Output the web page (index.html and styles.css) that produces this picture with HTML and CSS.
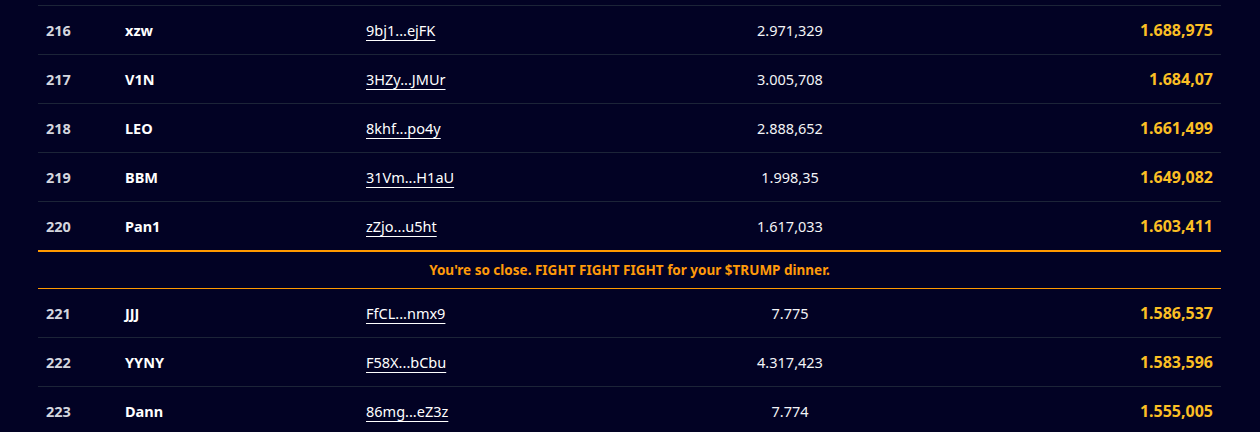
FILE: index.html
```html
<!DOCTYPE html>
<html>
<head>
<meta charset="utf-8">
<link rel="stylesheet" href="styles.css">
</head>
<body>
<div class="board">
  <div class="row"><span class="rank">216</span><span class="name">xzw</span><span class="addr"><a href="#">9bj1...ejFK</a></span><span class="val">2.971,329</span><span class="score">1.688,975</span></div>
  <div class="row"><span class="rank">217</span><span class="name">V1N</span><span class="addr"><a href="#">3HZy...JMUr</a></span><span class="val">3.005,708</span><span class="score">1.684,07</span></div>
  <div class="row"><span class="rank">218</span><span class="name">LEO</span><span class="addr"><a href="#">8khf...po4y</a></span><span class="val">2.888,652</span><span class="score">1.661,499</span></div>
  <div class="row"><span class="rank">219</span><span class="name">BBM</span><span class="addr"><a href="#">31Vm...H1aU</a></span><span class="val">1.998,35</span><span class="score">1.649,082</span></div>
  <div class="row"><span class="rank">220</span><span class="name">Pan1</span><span class="addr"><a href="#">zZjo...u5ht</a></span><span class="val">1.617,033</span><span class="score">1.603,411</span></div>
  <div class="cutoff">You're so close. FIGHT FIGHT FIGHT for your $TRUMP dinner.</div>
  <div class="row after"><span class="rank">221</span><span class="name">JJJ</span><span class="addr"><a href="#">FfCL...nmx9</a></span><span class="val">7.775</span><span class="score">1.586,537</span></div>
  <div class="row"><span class="rank">222</span><span class="name">YYNY</span><span class="addr"><a href="#">F58X...bCbu</a></span><span class="val">4.317,423</span><span class="score">1.583,596</span></div>
  <div class="row"><span class="rank">223</span><span class="name">Dann</span><span class="addr"><a href="#">86mg...eZ3z</a></span><span class="val">7.774</span><span class="score">1.555,005</span></div>
</div>
</body>
</html>
```
FILE: styles.css
```css
html, body {
  margin: 0;
  padding: 0;
  background: #020224;
  height: 100%;
  overflow: hidden;
}
body {
  font-family: "Noto Sans", "Open Sans", sans-serif;
  font-size: 14.5px;
  color: #f3f4f6;
}
.board {
  margin: 5px 39px 0 38px;
  display: flex;
  flex-direction: column;
}
.row {
  display: grid;
  grid-template-columns: 79px 241px 232px 400px 1fr;
  align-items: center;
  height: 48px;
  border-top: 1px solid #1c2438;
}
.row.after {
  border-top: none;
}
.row > span {
  padding: 0 8px;
}
.rank {
  font-weight: 700;
  color: #d4d6de;
}
.name {
  font-weight: 700;
  color: #ffffff;
}
.addr a {
  color: #ffffff;
  text-decoration: underline;
  text-underline-offset: 4px;
  text-decoration-thickness: 1px;
}
.val {
  text-align: center;
  color: #f3f4f6;
}
.score {
  text-align: right;
  font-weight: 700;
  font-size: 16px;
  color: #fbbf24;
}
.cutoff {
  border-top: 2px solid #ff9900;
  border-bottom: 1px solid #ff9900;
  height: 36px;
  display: flex;
  align-items: center;
  justify-content: center;
  color: #ff9a0a;
  font-weight: 700;
  font-size: 13.5px;
}
```
